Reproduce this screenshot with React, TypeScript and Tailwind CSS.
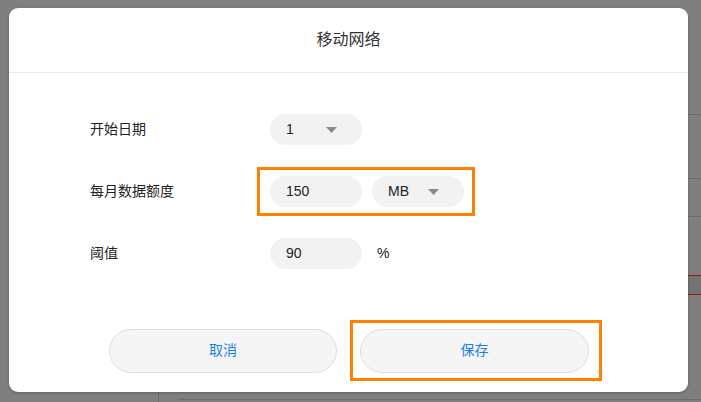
const font = { fontFamily: '"Liberation Sans", "Noto Sans CJK SC", sans-serif' }

function Caret() {
  return (
    <svg width="11" height="6" viewBox="0 0 11 6" className="shrink-0">
      <path d="M0 0h11L5.5 6z" fill="#8a8a8a" />
    </svg>
  )
}

function Pill({ value, select }: { value: string; select?: boolean }) {
  return (
    <div className="w-[92px] h-[31px] rounded-full bg-[#f2f2f2] flex items-center pl-[16px] pr-[25px] justify-between text-[14px] text-[#222]">
      <span>{value}</span>
      {select && <Caret />}
    </div>
  )
}

export default function App() {
  return (
    <div className="relative w-[701px] h-[402px] bg-[#7f7f7f] overflow-hidden" style={font}>
      {/* page behind the backdrop */}
      <div className="absolute right-0 top-[114px] w-[13px] h-px bg-[#6c6c6c]" />
      <div className="absolute right-0 top-[178px] w-[13px] h-px bg-[#6c6c6c]" />
      <div className="absolute right-0 top-[216px] w-[13px] h-px bg-[#6c6c6c]" />
      <div className="absolute right-0 top-[275px] w-[13px] h-[20px] bg-[#737373] border-y border-[#8e1c1c]" />
      <div className="absolute left-[158px] top-[392px] w-px h-[10px] bg-[#6c6c6c]" />
      <div className="absolute left-[178px] top-[399px] right-0 h-px bg-[#6c6c6c]" />

      <div className="absolute left-[9px] top-[8px] w-[679px] h-[384px] bg-white rounded-[9px] shadow-[0_1px_3px_rgba(0,0,0,0.25)] flex flex-col">
        <div className="h-[65px] flex items-center justify-center border-b border-[#e8e8e8] text-[16px] text-[#333]">
          移动网络
        </div>

        <div className="flex flex-col pl-[81px] pt-[41px] gap-[31px] text-[14px] text-[#222]">
          <div className="flex items-center h-[31px]">
            <span className="w-[180px]">开始日期</span>
            <Pill value="1" select />
          </div>
          <div className="flex items-center h-[31px]">
            <span className="w-[180px]">每月数据额度</span>
            <div className="-ml-[13px] w-[218px] h-[49px] border-[3px] border-[#ff8000] flex items-center pl-[10px] gap-[10px]">
              <Pill value="150" />
              <Pill value="MB" select />
            </div>
          </div>
          <div className="flex items-center h-[31px]">
            <span className="w-[180px]">阈值</span>
            <Pill value="90" />
            <span className="ml-[15px] text-[14px]">%</span>
          </div>
        </div>

        <div className="mt-auto mb-[11px] flex items-center pl-[100px] gap-[13px]">
          <button className="w-[228px] h-[44px] rounded-full bg-[#f5f5f5] border border-[#dedede] text-[14px] text-[#1a7ef0]">
            取消
          </button>
          <div className="w-[252px] h-[61px] border-[3px] border-[#ff8000] flex items-center pl-[7px]">
            <button className="w-[229px] h-[44px] rounded-full bg-[#f5f5f5] border border-[#dedede] text-[14px] text-[#1a7ef0]">
              保存
            </button>
          </div>
        </div>
      </div>
    </div>
  )
}
